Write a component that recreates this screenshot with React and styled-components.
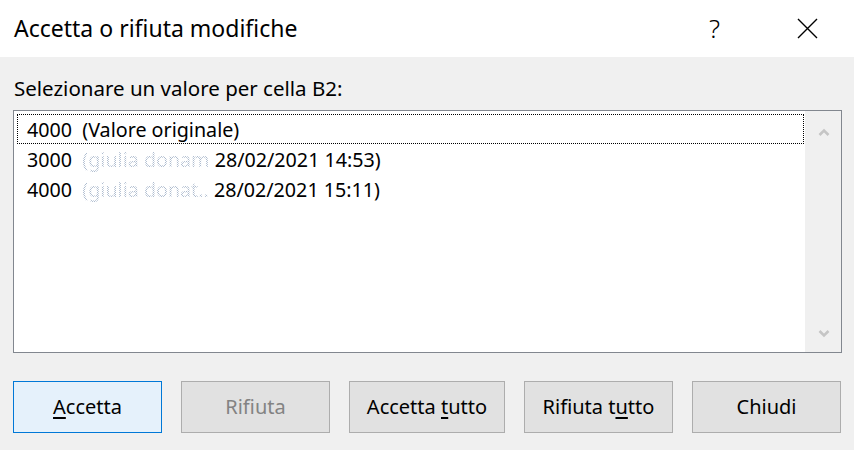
import React from "react";
import styled, { createGlobalStyle } from "styled-components";

const Global = createGlobalStyle`
  html, body {
    margin: 0;
    padding: 0;
    background: #f0f0f0;
    width: 854px;
    height: 450px;
    overflow: hidden;
  }
  * { box-sizing: border-box; }
`;

const FONT = `"Noto Sans", "Segoe UI", "Liberation Sans", sans-serif`;

const Window = styled.div`
  width: 854px;
  height: 450px;
  background: #f0f0f0;
  font-family: ${FONT};
  color: #000;
  display: flex;
  flex-direction: column;
`;

const TitleBar = styled.div`
  height: 57px;
  background: #fff;
  display: flex;
  align-items: center;
  padding-left: 14px;
`;

const Title = styled.div`
  flex: 1;
  font-size: 23px;
  line-height: 28px;
  padding-bottom: 2px;
`;

const TitleButtons = styled.div`
  display: flex;
  align-items: center;
  gap: 14px;
  height: 100%;
`;

const HelpButton = styled.div`
  width: 63px;
  height: 100%;
  display: flex;
  align-items: center;
  justify-content: center;
  font-size: 26px;
  font-weight: 300;
  padding-bottom: 2px;
`;

const CloseButton = styled.div`
  width: 94px;
  height: 100%;
  display: flex;
  align-items: center;
  justify-content: center;
  padding-bottom: 1px;
`;

const Content = styled.div`
  flex: 1;
  padding: 19px 13px 0 13px;
  display: flex;
  flex-direction: column;
`;

const Prompt = styled.div`
  font-size: 20.5px;
  line-height: 25px;
  height: 25px;
  padding-left: 1px;
`;

const ListBox = styled.div`
  margin-top: 9px;
  width: 829px;
  height: 243px;
  border: 1px solid #82878f;
  background: #fff;
  display: flex;
`;

const Items = styled.div`
  flex: 1;
  padding: 3px 1px 3px 3px;
  display: flex;
  flex-direction: column;
`;

const Item = styled.div`
  height: 30px;
  border: 1px ${(p) => (p.$focused ? "dotted #000" : "solid transparent")};
  padding-left: 9px;
  display: flex;
  align-items: center;
  font-size: 19.7px;
  white-space: pre;
`;

const Faded = styled.span`
  color: #6d86a8;
  -webkit-mask-image: conic-gradient(#000 25%, transparent 0 50%, #000 0 75%, transparent 0);
  mask-image: conic-gradient(#000 25%, transparent 0 50%, #000 0 75%, transparent 0);
  -webkit-mask-size: 2px 2px;
  mask-size: 2px 2px;
  opacity: 0.55;
`;

const ScrollBar = styled.div`
  width: 36px;
  background: #f0f0f0;
  display: flex;
  flex-direction: column;
  justify-content: space-between;
  align-items: center;
  padding: 17px 0 14px 1px;
`;

const ButtonRow = styled.div`
  margin-top: 28px;
  display: flex;
  gap: 19px;
`;

const Button = styled.div`
  width: ${(p) => p.$w || 149}px;
  height: 52px;
  display: flex;
  align-items: center;
  justify-content: center;
  font-size: 20px;
  padding-bottom: 2px;
  background: ${(p) => (p.$default ? "#e5f1fb" : "#e1e1e1")};
  border: 1px solid ${(p) => (p.$default ? "#0078d7" : "#adadad")};
  color: ${(p) => (p.$disabled ? "#838383" : "#000")};
  u {
    text-decoration-thickness: 2px;
    text-underline-offset: 3px;
  }
`;

const Chevron = ({ down }) => (
  <svg width="12" height="9" viewBox="0 0 12 9">
    <path
      d={down ? "M1.5 2 L6 6.5 L10.5 2" : "M1.5 7 L6 2.5 L10.5 7"}
      fill="none"
      stroke="#c5c5c5"
      strokeWidth="2.6"
    />
  </svg>
);

const CloseIcon = () => (
  <svg width="21" height="21" viewBox="0 0 21 21">
    <path d="M1 1 L20 20 M20 1 L1 20" stroke="#000" strokeWidth="1.4" fill="none" />
  </svg>
);

const entries = [
  { value: "4000", rest: <>(Valore originale)</>, focused: true },
  {
    value: "3000",
    rest: (
      <>
        <Faded>(giulia donam</Faded> 28/02/2021 14:53)
      </>
    ),
  },
  {
    value: "4000",
    rest: (
      <>
        <Faded>(giulia donat..</Faded> 28/02/2021 15:11)
      </>
    ),
  },
];

export default function App() {
  return (
    <>
      <Global />
      <Window>
        <TitleBar>
          <Title>Accetta o rifiuta modifiche</Title>
          <TitleButtons>
            <HelpButton>?</HelpButton>
            <CloseButton>
              <CloseIcon />
            </CloseButton>
          </TitleButtons>
        </TitleBar>
        <Content>
          <Prompt>Selezionare un valore per cella B2:</Prompt>
          <ListBox>
            <Items>
              {entries.map((e, i) => (
                <Item key={i} $focused={e.focused}>
                  {e.value}
                  {"  "}
                  {e.rest}
                </Item>
              ))}
            </Items>
            <ScrollBar>
              <Chevron />
              <Chevron down />
            </ScrollBar>
          </ListBox>
          <ButtonRow>
            <Button $default>
              <span>
                <u>A</u>ccetta
              </span>
            </Button>
            <Button $disabled>Rifiuta</Button>
            <Button $w={156}>
              <span>
                Accetta <u>t</u>utto
              </span>
            </Button>
            <Button>
              <span>
                Rifiuta t<u>u</u>tto
              </span>
            </Button>
            <Button>Chiudi</Button>
          </ButtonRow>
        </Content>
      </Window>
    </>
  );
}
